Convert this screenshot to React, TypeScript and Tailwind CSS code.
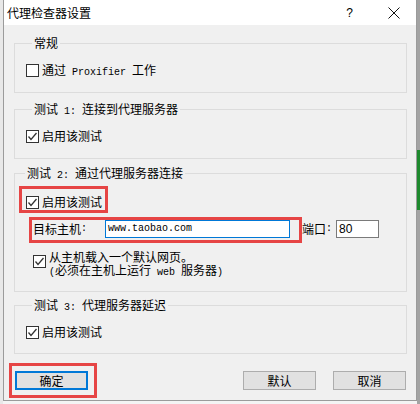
import React from "react";

const mono = "font-['Liberation_Mono',monospace] text-[10px] leading-none";

const CheckBox = ({ checked }: { checked?: boolean }) => (
  <span className="w-[13px] h-[13px] shrink-0 border border-[#333] bg-white flex items-center justify-center">
    {checked && (
      <svg width="11" height="11" viewBox="0 0 11 11">
        <polyline points="1.5,5.5 4,8.5 9.5,2" fill="none" stroke="#333" strokeWidth="1.3" />
      </svg>
    )}
  </span>
);

const CheckRow = ({ checked, children }: { checked?: boolean; children: React.ReactNode }) => (
  <div className="flex items-center h-4 gap-[3px]">
    <CheckBox checked={checked} />
    <span className="leading-4 whitespace-nowrap">{children}</span>
  </div>
);

const Group = ({
  legend,
  className,
  children,
}: {
  legend: React.ReactNode;
  className: string;
  children: React.ReactNode;
}) => (
  <fieldset className={`ml-[10px] mr-[9px] border border-[#dcdcdc] ${className}`}>
    <legend className="ml-[6px] px-[2px] h-4 leading-4 whitespace-nowrap">{legend}</legend>
    {children}
  </fieldset>
);

const Btn = ({ children, primary }: { children: React.ReactNode; primary?: boolean }) => (
  <div
    className={`w-[73px] h-[19px] bg-[#e1e1e1] flex items-center justify-center leading-4 ${
      primary ? "border-2 border-[#0078d7]" : "border border-[#adadad]"
    }`}
  >
    {children}
  </div>
);

export default function App() {
  return (
    <div className="w-[420px] h-[404px] flex overflow-hidden bg-[#f4f4f4] text-[12px] text-black font-['Noto_Sans_CJK_SC',sans-serif]">
      <div className="w-[3px] bg-[#e8e8e8]" />

      {/* dialog */}
      <div className="w-[414px] h-[401px] shrink-0 flex flex-col bg-[#f0f0f0] border-x border-b border-[#9b9b9b]">
        {/* title bar */}
        <div className="h-[25px] shrink-0 bg-white flex items-center pl-[3px] pr-[13px]">
          <span className="leading-4">代理检查器设置</span>
          <span className="ml-auto w-[19px] text-center font-['Liberation_Sans',sans-serif] text-[12px] leading-4">?</span>
          <span className="ml-[25px] w-[19px] flex justify-center">
            <svg width="12" height="12" viewBox="0 0 12 12">
              <path d="M0.5 0.5 L11.5 11.5 M11.5 0.5 L0.5 11.5" stroke="#111" strokeWidth="1" />
            </svg>
          </span>
        </div>

        <Group legend="常规" className="mt-[10px] pl-[11px] pt-[11px] pb-[14px]">
          <CheckRow>
            通过<span className={mono}> Proxifier </span>工作
          </CheckRow>
        </Group>

        <Group
          legend={
            <>
              测试<span className={mono}> 1: </span>连接到代理服务器
            </>
          }
          className="mt-[8px] pl-[11px] pt-[11px] pb-[14px]"
        >
          <CheckRow checked>启用该测试</CheckRow>
        </Group>

        <Group
          legend={
            <>
              测试<span className={mono}> 2: </span>通过代理服务器连接
            </>
          }
          className="mt-[6px] pl-[4px] pt-[5px] pb-[15px]"
        >
          <div className="w-fit border-[3px] border-[#e64545] pl-[4px] pr-[3px] pt-[5px]">
            <CheckRow checked>启用该测试</CheckRow>
          </div>

          <div className="mt-[4px] flex items-start">
            <div className="ml-[10px] flex items-start border-[3px] border-[#e64545] pl-[1px] pr-[9px] pb-[2px]">
              <span className="w-[72px] h-[18px] flex items-center leading-4 whitespace-nowrap">
                目标主机<span className={mono}>:</span>
              </span>
              <div className="w-[185px] h-[18px] border border-[#0078d7] bg-white flex items-center pl-[2px]">
                <span className={mono}>www.taobao.com</span>
              </div>
            </div>
            <span className="mt-[3px] w-[34px] h-[18px] flex items-center leading-4 whitespace-nowrap">
              端口<span className={mono}>:</span>
            </span>
            <div className="mt-[3px] w-[43px] h-[18px] border border-[#7a7a7a] bg-white flex items-center pl-[2px] font-['Liberation_Sans',sans-serif] text-[12px]">
              80
            </div>
          </div>

          <div className="mt-[7px] ml-[14px] flex items-start gap-[3px]">
            <span className="mt-[5px]">
              <CheckBox checked />
            </span>
            <div className="whitespace-nowrap">
              <div className="h-[13px] leading-[13px]">从主机载入一个默认网页。</div>
              <div className="h-[13px] leading-[13px]">
                <span className={mono}>(</span>必须在主机上运行<span className={mono}> web </span>服务器
                <span className={mono}>)</span>
              </div>
            </div>
          </div>
        </Group>

        <Group
          legend={
            <>
              测试<span className={mono}> 3: </span>代理服务器延迟
            </>
          }
          className="mt-[5px] pl-[11px] pt-[11px] pb-[13px]"
        >
          <CheckRow checked>启用该测试</CheckRow>
        </Group>

        {/* buttons */}
        <div className="mt-[9px] flex items-start pl-[5px] pr-[10px]">
          <div className="border-[3px] border-[#e64545] pl-[3px] pr-[6px] py-[5px]">
            <Btn primary>确定</Btn>
          </div>
          <div className="ml-auto mt-[8px]">
            <Btn>默认</Btn>
          </div>
          <div className="ml-[17px] mt-[8px]">
            <Btn>取消</Btn>
          </div>
        </div>
      </div>

      <div className="flex-1 h-[404px] flex flex-col bg-[#a3a3a3]">
        <div className="mt-[150px] h-[60px] bg-[#1e8a2e]" />
      </div>
    </div>
  );
}
